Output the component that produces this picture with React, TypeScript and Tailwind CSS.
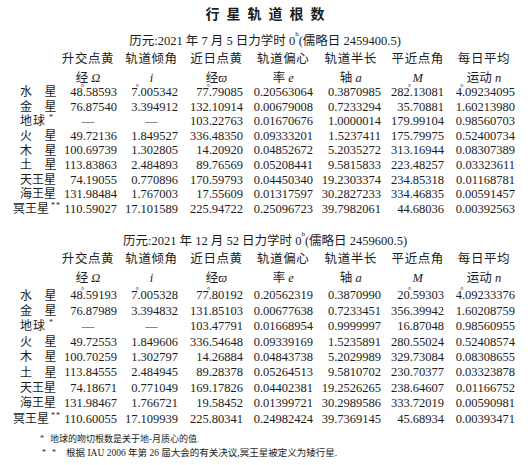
const serif = "font-['Liberation_Serif','Noto_Sans_CJK_SC',serif]"

const cols = 'grid grid-cols-[56.5px_63px_64px_66px_67.5px_67.5px_66.5px_66px]'
const cellPad = ['pr-[2.5px]', 'pr-[5.5px]', 'pr-[6.5px]', 'pr-[4px]', 'pr-[3.5px]', 'pr-[7px]', 'pr-[2px]']
const degCols = [0, 1, 2, 5, 6]

type Row = { name: string; vals: string[] }

const rows1: Row[] = [
    { name: '水星', vals: ['48.58593', '7.005342', '77.79085', '0.20563064', '0.3870985', '282.13081', '4.09234095'] },
    { name: '金星', vals: ['76.87540', '3.394912', '132.10914', '0.00679008', '0.7233294', '35.70881', '1.60213980'] },
    { name: '地球', vals: ['—', '—', '103.22763', '0.01670676', '1.0000014', '179.99104', '0.98560703'] },
    { name: '火星', vals: ['49.72136', '1.849527', '336.48350', '0.09333201', '1.5237411', '175.79975', '0.52400734'] },
    { name: '木星', vals: ['100.69739', '1.302805', '14.20920', '0.04852672', '5.2035272', '313.16944', '0.08307389'] },
    { name: '土星', vals: ['113.83863', '2.484893', '89.76569', '0.05208441', '9.5815833', '223.48257', '0.03323611'] },
    { name: '天王星', vals: ['74.19055', '0.770896', '170.59793', '0.04450340', '19.2303374', '234.85318', '0.01168781'] },
    { name: '海王星', vals: ['131.98484', '1.767003', '17.55609', '0.01317597', '30.2827233', '334.46835', '0.00591457'] },
    { name: '冥王星', vals: ['110.59027', '17.101589', '225.94722', '0.25096723', '39.7982061', '44.68036', '0.00392563'] },
]

const rows2: Row[] = [
    { name: '水星', vals: ['48.59193', '7.005328', '77.80192', '0.20562319', '0.3870990', '20.59303', '4.09233376'] },
    { name: '金星', vals: ['76.87989', '3.394832', '131.85103', '0.00677638', '0.7233451', '356.39942', '1.60208759'] },
    { name: '地球', vals: ['—', '—', '103.47791', '0.01668954', '0.9999997', '16.87048', '0.98560955'] },
    { name: '火星', vals: ['49.72553', '1.849606', '336.54648', '0.09339169', '1.5235891', '280.55024', '0.52408574'] },
    { name: '木星', vals: ['100.70259', '1.302797', '14.26884', '0.04843738', '5.2029989', '329.73084', '0.08308655'] },
    { name: '土星', vals: ['113.84555', '2.484945', '89.28378', '0.05264513', '9.5810702', '230.70377', '0.03323878'] },
    { name: '天王星', vals: ['74.18671', '0.771049', '169.17826', '0.04402381', '19.2526265', '238.64607', '0.01166752'] },
    { name: '海王星', vals: ['131.98467', '1.766721', '19.58452', '0.01399721', '30.2989586', '333.72019', '0.00590981'] },
    { name: '冥王星', vals: ['110.60055', '17.109939', '225.80341', '0.24982424', '39.7369145', '45.68934', '0.00393471'] },
]

const head1 = ['升交点黄', '轨道倾角', '近日点黄', '轨道偏心', '轨道半长', '平近点角', '每日平均']
const head2: [string, string][] = [['经 ', 'Ω'], ['', 'i'], ['经', 'ϖ'], ['率 ', 'e'], ['轴 ', 'a'], ['', 'M'], ['运动 ', 'n']]

// degree sign sits over the decimal point and takes no width
function Num({ v, deg }: { v: string; deg: boolean }) {
    if (!deg) return <>{v}</>
    const [a, b] = v.split('.')
    return (
        <>
            {a}
            <span className="relative">
                .<span className="absolute left-[-2px] top-[-2px] text-[9px] leading-none">°</span>
            </span>
            {b}
        </>
    )
}

function Label({ name }: { name: string }) {
    if (name === '地球') {
        return (
            <div className="flex pl-[20px] items-center whitespace-nowrap text-[12px]">
                <span>地</span>
                <span className="ml-[1px]">球</span>
                <span className="ml-[4px] text-[8px] self-start mt-[-1px]">*</span>
            </div>
        )
    }
    if (name === '冥王星') {
        return (
            <div className="flex pl-[13px] items-center whitespace-nowrap text-[12px]">
                <span>冥王星</span>
                <span className="ml-[2px] text-[8px] self-start mt-[-1px] tracking-[1px]">**</span>
            </div>
        )
    }
    if (name.length === 2) {
        return (
            <div className="flex pl-[20px] text-[12px]">
                <div className="flex w-[37px] justify-between">
                    <span>{name[0]}</span>
                    <span>{name[1]}</span>
                </div>
            </div>
        )
    }
    return <div className="pl-[20px] whitespace-nowrap text-[12px]">{name}</div>
}

function Section({ epoch, rows, rowH, gapData }: { epoch: React.ReactNode; rows: Row[]; rowH: string; gapData: string }) {
    return (
        <div className="flex flex-col">
            <div className="h-[16px] flex items-center justify-center">{epoch}</div>
            <div className={`${cols} h-[16px] mt-[2px] items-center`}>
                <div />
                {head1.map(h => (
                    <div key={h} className="text-center tracking-[0.6px]">{h}</div>
                ))}
            </div>
            <div className={`${cols} h-[13px] mt-[5px] items-center`}>
                <div />
                {head2.map(([c, s], i) => (
                    <div key={i} className="text-center">
                        {c}
                        <span className="italic">{s}</span>
                    </div>
                ))}
            </div>
            <div className={`flex flex-col ${gapData}`}>
                {rows.map((r, ri) => (
                    <div key={r.name} className={`${cols} ${rowH} items-center`}>
                        <Label name={r.name} />
                        {r.vals.map((v, ci) =>
                            v === '—' ? (
                                <div key={ci} className="text-center">—</div>
                            ) : (
                                <div key={ci} className={`text-right whitespace-nowrap ${cellPad[ci]}`}>
                                    <Num v={v} deg={ri === 0 && degCols.includes(ci)} />
                                </div>
                            )
                        )}
                    </div>
                ))}
            </div>
        </div>
    )
}

function Epoch({ date, jd }: { date: string; jd: string }) {
    return (
        <div className="whitespace-pre">
            历元:{date}日力学时 0<sup className="text-[7px] align-[5px]">h</sup>(儒略日 {jd})
        </div>
    )
}

export default function App() {
    return (
        <div className={`w-[530px] h-[465px] bg-white text-[#1c1c1c] text-[12.5px] leading-none ${serif}`}>
            <div className="h-[26px] flex items-center justify-center">
                <h1 className="font-['Noto_Sans_CJK_SC',sans-serif] font-bold text-[14px] tracking-[7px] pl-[7px]">行星轨道根数</h1>
            </div>
            <div className="mt-[7px]">
                <Section
                    epoch={<Epoch date="2021 年 7 月 5 " jd="2459400.5" />}
                    rows={rows1}
                    rowH="h-[14.6px]"
                    gapData="mt-0"
                />
            </div>
            <div className="mt-[16.6px]">
                <Section
                    epoch={<Epoch date="2021 年 12 月 52 " jd="2459600.5" />}
                    rows={rows2}
                    rowH="h-[15.4px]"
                    gapData="mt-[3px]"
                />
            </div>
            <div className="mt-[6px] flex flex-col">
                <div className="h-[14px] flex items-center pl-[40px] text-[9px]">
                    <span className="text-[8px]">*</span>
                    <span className="ml-[6px]">地球的吻切根数是关于地-月质心的值.</span>
                </div>
                <div className="h-[14px] flex items-center pl-[42px] text-[9.5px]">
                    <span className="text-[8px] tracking-[6px]">**</span>
                    <span className="ml-[4px] whitespace-pre">根据 IAU 2006 年第 26 届大会的有关决议,冥王星被定义为矮行星.</span>
                </div>
            </div>
        </div>
    )
}
